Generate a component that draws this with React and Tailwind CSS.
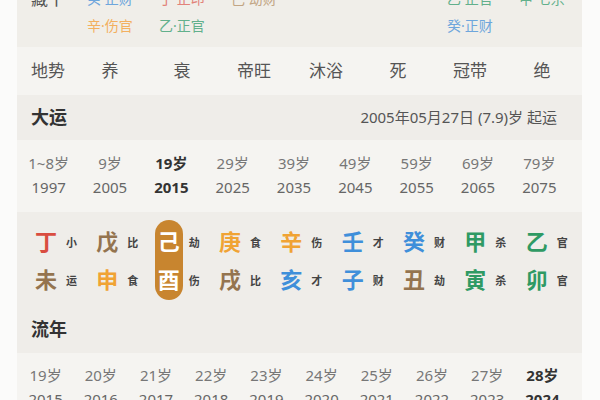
import React from 'react';

const C = {
  red: 'text-[#d94d40]',
  brown: 'text-[#94744f]',
  gold: 'text-[#f0a334]',
  blue: 'text-[#3f8fda]',
  green: 'text-[#2f9a64]',
};

const hidden = [
  [
    { t: '癸·正财', c: 'text-[#6ea6dc]' },
    { t: '辛·伤官', c: 'text-[#f3b060]' },
  ],
  [
    { t: '丁·正印', c: 'text-[#e2827a]' },
    { t: '乙·正官', c: 'text-[#62b08c]' },
  ],
  [{ t: '己·劫财', c: 'text-[#c2a584]' }],
  [],
  [],
  [
    { t: '乙·正官', c: 'text-[#62b08c]' },
    { t: '癸·正财', c: 'text-[#6ea6dc]' },
  ],
  [{ t: '甲·七杀', c: 'text-[#62b08c]' }],
];

const diShi = ['养', '衰', '帝旺', '沐浴', '死', '冠带', '绝'];

const daYun = [
  ['1~8岁', '1997'],
  ['9岁', '2005'],
  ['19岁', '2015', true],
  ['29岁', '2025'],
  ['39岁', '2035'],
  ['49岁', '2045'],
  ['59岁', '2055'],
  ['69岁', '2065'],
  ['79岁', '2075'],
];

const ganZhi = [
  { g: '丁', gc: C.red, gl: '小', z: '未', zc: C.brown, zl: '运' },
  { g: '戊', gc: C.brown, gl: '比', z: '申', zc: C.gold, zl: '食' },
  { g: '己', gc: '', gl: '劫', z: '酉', zc: '', zl: '伤', active: true },
  { g: '庚', gc: C.gold, gl: '食', z: '戌', zc: C.brown, zl: '比' },
  { g: '辛', gc: C.gold, gl: '伤', z: '亥', zc: C.blue, zl: '才' },
  { g: '壬', gc: C.blue, gl: '才', z: '子', zc: C.blue, zl: '财' },
  { g: '癸', gc: C.blue, gl: '财', z: '丑', zc: C.brown, zl: '劫' },
  { g: '甲', gc: C.green, gl: '杀', z: '寅', zc: C.green, zl: '杀' },
  { g: '乙', gc: C.green, gl: '官', z: '卯', zc: C.green, zl: '官' },
];

const liuNian = [
  ['19岁', '2015'],
  ['20岁', '2016'],
  ['21岁', '2017'],
  ['22岁', '2018'],
  ['23岁', '2019'],
  ['24岁', '2020'],
  ['25岁', '2021'],
  ['26岁', '2022'],
  ['27岁', '2023'],
  ['28岁', '2024', true],
];

function AgeGrid({ items, cols }) {
  return (
    <div className={`grid ${cols} w-[552px] text-[15px] leading-[24px]`}>
      {items.map(([age, year, bold]) => (
        <div
          key={age}
          className={`flex flex-col items-center ${
            bold ? 'font-bold text-[#333]' : 'text-[#777]'
          }`}
        >
          <span>{age}</span>
          <span className={bold ? '' : 'text-[#666]'}>{year}</span>
        </div>
      ))}
    </div>
  );
}

function GanZhiCell({ item }) {
  const big = 'h-[38px] flex items-center justify-center text-[22px] font-bold';
  return (
    <div className="flex pl-[14px]">
      <div
        className={`flex flex-col w-[28px] ${
          item.active ? 'bg-[#c8852f] rounded-full py-[2px] text-white' : 'py-[2px]'
        }`}
      >
        <span className={`${big} ${item.gc}`}>{item.g}</span>
        <span className={`${big} ${item.zc}`}>{item.z}</span>
      </div>
      <div className="flex flex-col py-[2px] ml-[6px] text-[11px] font-semibold text-[#444]">
        <span className="h-[38px] flex items-end pb-[9px]">{item.gl}</span>
        <span className="h-[38px] flex items-end pb-[9px]">{item.zl}</span>
      </div>
    </div>
  );
}

export default function App() {
  return (
    <div
      className="w-[600px] h-[400px] overflow-hidden bg-[#fbfbfa]"
      style={{ fontFamily: '"Noto Sans", "Noto Sans CJK SC", sans-serif' }}
    >
      <div className="ml-[17px] w-[565px] bg-[#f5f4f1]">
        <div className="h-[47px] bg-[#f0eee9] flex">
          <div className="w-[57px] pl-[14px] -mt-[15px] text-[17px] leading-[27px] text-[#555]">
            藏干
          </div>
          <div className="grid grid-cols-7 w-[504px] -mt-[15px] text-[14px] leading-[27px]">
            {hidden.map((col, i) => (
              <div key={i} className="flex flex-col items-center">
                {col.map((it) => (
                  <span key={it.t} className={it.c}>
                    {it.t}
                  </span>
                ))}
              </div>
            ))}
          </div>
        </div>

        <div className="h-[48px] flex items-center text-[17px] text-[#555]">
          <div className="w-[57px] pl-[14px]">地势</div>
          <div className="grid grid-cols-7 w-[504px]">
            {diShi.map((d) => (
              <span key={d} className="text-center">
                {d}
              </span>
            ))}
          </div>
        </div>

        <div className="h-[45px] bg-[#efede9] flex items-center justify-between pl-[14px] pr-[25px]">
          <span className="text-[18px] font-bold text-[#333]">大运</span>
          <span className="text-[15px] text-[#555]">2005年05月27日 (7.9)岁 起运</span>
        </div>

        <div className="pt-[11px] pb-[13px] pl-[1px]">
          <AgeGrid items={daYun} cols="grid-cols-9" />
        </div>

        <div className="bg-[#efede9] pt-[8px] pb-[5px] pl-[1px]">
          <div className="grid grid-cols-9 w-[552px]">
            {ganZhi.map((g) => (
              <GanZhiCell key={g.g} item={g} />
            ))}
          </div>
        </div>

        <div className="h-[48px] bg-[#efede9] flex items-center pl-[14px]">
          <span className="text-[18px] font-bold text-[#333]">流年</span>
        </div>

        <div className="pt-[10px] pb-[10px] pl-[1px]">
          <AgeGrid items={liuNian} cols="grid-cols-10" />
        </div>
      </div>
    </div>
  );
}
